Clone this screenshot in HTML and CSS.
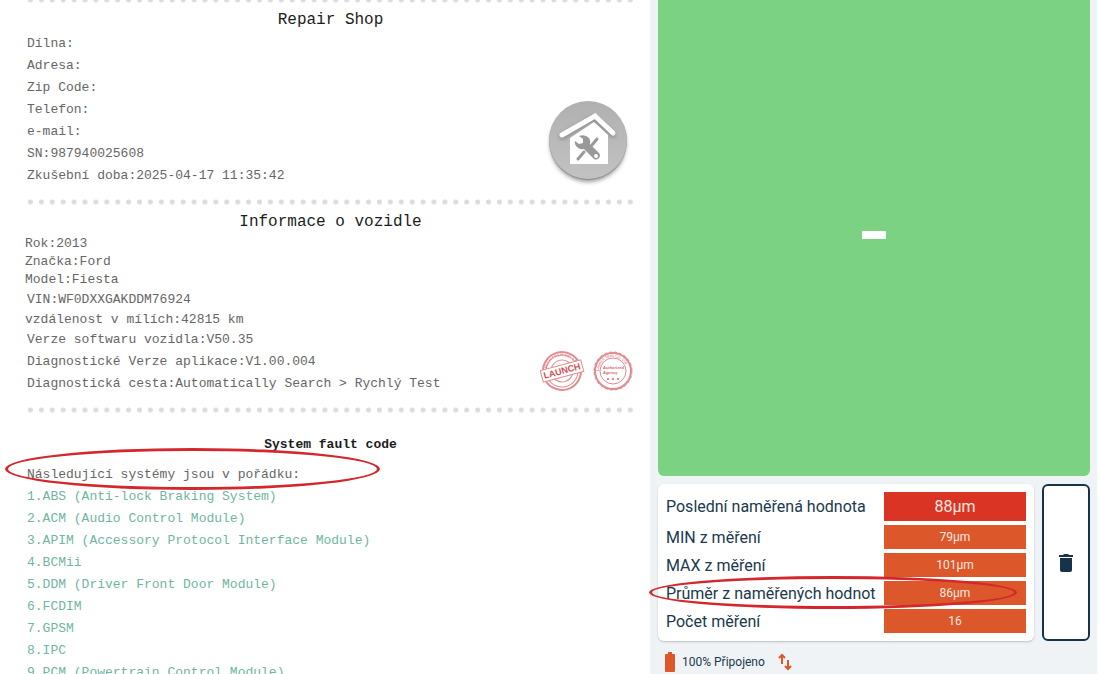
FILE: index.html
```
<!DOCTYPE html>
<html lang="cs">
<head>
  <meta charset="UTF-8">
  <title>Diagnostika a měření laku</title>
  <link rel="stylesheet" href="styles.css">
</head>
<body>
  <main class="page">
    <div class="report">
      <div class="dots first"></div>
      <section>
        <h2>Repair Shop</h2>
        <div class="row">
          <div class="lines">
            <p>Dílna:</p>
            <p>Adresa:</p>
            <p>Zip Code:</p>
            <p>Telefon:</p>
            <p>e-mail:</p>
            <p>SN:987940025608</p>
            <p>Zkušební doba:2025-04-17 11:35:42</p>
          </div>
          <svg class="shop-icon" viewBox="0 0 84 88" width="84" height="88">
            <defs>
              <linearGradient id="disc" x1="0" y1="0" x2="0" y2="1">
                <stop offset="0" stop-color="#b0b0b0"/>
                <stop offset="1" stop-color="#c2c2c2"/>
              </linearGradient>
              <filter id="soft" x="-20%" y="-20%" width="140%" height="140%">
                <feGaussianBlur stdDeviation="2"/>
              </filter>
            </defs>
            <circle cx="42" cy="45" r="38" fill="#999" filter="url(#soft)"/>
            <circle cx="42" cy="42" r="39" fill="#8f8f8f"/>
            <circle cx="42" cy="41" r="39" fill="url(#disc)"/>
            <path d="M16 38 L48 19 L67 36" fill="none" stroke="#888" stroke-width="5" stroke-linecap="round" filter="url(#soft)"/>
            <path d="M24 39 L48 23 L62 36 V65 H24 Z" fill="#fff"/>
            <path d="M16 36 L49 17 L67 34" fill="none" stroke="#fff" stroke-width="5" stroke-linecap="round" stroke-linejoin="miter"/>
            <path d="M51 40 L46 46 M38 53 L32 60" stroke="#999" stroke-width="3" stroke-linecap="round"/>
            <path d="M33 37 q6 -2 10 2 q2 3 1 6 L53 54 a4 4 0 0 1 -5 6 L38 50 q-4 1 -7 -2 q-3 -3 -2 -6 l4 3 4 -1 0 -4 Z" fill="#999"/>
            <circle cx="50" cy="57" r="2" fill="#fff"/>
          </svg>
        </div>
      </section>

      <div class="dots"></div>
      <section>
        <h2>Informace o vozidle</h2>
        <div class="row">
          <div class="groups">
            <div class="lines tight flush">
              <p>Rok:2013</p>
              <p>Značka:Ford</p>
              <p>Model:Fiesta</p>
            </div>
            <div class="lines medium">
              <p>VIN:WF0DXXGAKDDM76924</p>
              <p class="outdent">vzdálenost v mílích:42815 km</p>
              <p>Verze softwaru vozidla:V50.35</p>
            </div>
            <div class="lines">
              <p>Diagnostické Verze aplikace:V1.00.004</p>
              <p>Diagnostická cesta:Automatically Search &gt; Rychlý Test</p>
            </div>
          </div>
          <svg class="stamps" viewBox="0 0 94 46" width="94" height="46">
            <defs>
              <path id="arcA" d="M7 22 a15 15 0 0 1 30 0"/>
              <path id="arcB" d="M59 22 a14 14 0 0 1 28 0"/>
            </defs>
            <g fill="none" stroke="#e08c90">
              <g transform="rotate(-15 22 22)">
                <circle cx="22" cy="22" r="19" stroke-width="2"/>
                <circle cx="22" cy="22" r="16" stroke-width="1"/>
                <circle cx="22" cy="22" r="11" stroke-width="1"/>
                <text class="tiny"><textPath href="#arcA">LAUNCH TECH CO. LTD</textPath></text>
                <rect x="1" y="16" width="42" height="12" fill="#fff" stroke-width="1"/>
                <text class="launch" x="22" y="25" text-anchor="middle">LAUNCH</text>
              </g>
              <circle cx="73" cy="22" r="18" stroke-width="2"/>
              <circle cx="73" cy="22" r="19" stroke-width="1" stroke-dasharray="3 2"/>
              <circle cx="73" cy="22" r="13" stroke-width="1"/>
            </g>
            <text class="tiny"><textPath href="#arcB">Launch Tech Co. Ltd</textPath></text>
            <text class="agency" x="63" y="20">Authorized</text>
            <text class="agency" x="63" y="25">Agency</text>
            <g fill="#d9656b">
              <circle cx="68" cy="30" r="1"/>
              <circle cx="73" cy="30" r="1"/>
              <circle cx="78" cy="30" r="1"/>
            </g>
          </svg>
        </div>
      </section>

      <div class="dots"></div>
      <section>
        <h2 class="fault-title">System fault code</h2>
        <div class="lines">
          <p class="marked">Následující systémy jsou v pořádku:<span class="ring ring-report"></span></p>
          <ul class="systems">
            <li>1.ABS (Anti-lock Braking System)</li>
            <li>2.ACM (Audio Control Module)</li>
            <li>3.APIM (Accessory Protocol Interface Module)</li>
            <li>4.BCMii</li>
            <li>5.DDM (Driver Front Door Module)</li>
            <li>6.FCDIM</li>
            <li>7.GPSM</li>
            <li>8.IPC</li>
            <li>9.PCM (Powertrain Control Module)</li>
          </ul>
        </div>
      </section>
    </div>

    <div class="gauge">
      <div class="display"><span class="dash"></span></div>
      <div class="results">
        <div class="card">
          <table>
            <tr class="last"><th scope="row">Poslední naměřená hodnota</th><td>88µm</td></tr>
            <tr><th scope="row">MIN z měření</th><td>79µm</td></tr>
            <tr><th scope="row">MAX z měření</th><td>101µm</td></tr>
            <tr class="marked"><th scope="row">Průměr z naměřených hodnot<span class="ring ring-gauge"></span></th><td>86µm</td></tr>
            <tr><th scope="row">Počet měření</th><td>16</td></tr>
          </table>
        </div>
        <button class="delete" type="button" aria-label="Smazat">
          <svg viewBox="0 0 14 18" width="14" height="18" fill="#17334a">
            <path d="M0 1 H4 L5 0 H9 L10 1 H14 V3 H0 Z M1 4 H13 V16 a2 2 0 0 1 -2 2 H3 a2 2 0 0 1 -2 -2 Z"/>
          </svg>
        </button>
      </div>
      <div class="status">
        <svg viewBox="0 0 10 20" width="10" height="20" fill="#dc5729">
          <path d="M3 0 H7 V2 H9 a1 1 0 0 1 1 1 V19 a1 1 0 0 1 -1 1 H1 a1 1 0 0 1 -1 -1 V3 a1 1 0 0 1 1 -1 H3 Z"/>
        </svg>
        <span>100% Připojeno</span>
        <svg class="arrows" viewBox="0 0 14 18" width="14" height="18" fill="none" stroke="#dc5729" stroke-width="2">
          <path d="M4 11 V2 M1 5 L4 2 L7 5 M10 7 V16 M7 13 L10 16 L13 13"/>
        </svg>
      </div>
    </div>
  </main>
</body>
</html>
```
FILE: styles.css
```
* { box-sizing: border-box; }
body { margin: 0; background: #fff; }
h2, p, ul { margin: 0; padding: 0; }
.page { display: grid; grid-template-columns: 13fr 9fr; height: 100vh; overflow: hidden; }

/* diagnostic report */
.report { padding: 0 14px 0 25px; color: #666; font: 13px/22px "Liberation Mono", "Courier New", monospace; min-width: 0; overflow: hidden; }
.dots { height: 6px; margin: 12px 0 5px; background: radial-gradient(circle, #dcdcdc 2px, transparent 3px) 0 0 / 11px 6px round; }
.dots.first { margin-top: -3px; }
h2 { color: #1c1c1c; font-size: 16px; line-height: 25px; font-weight: normal; text-align: center; }
.row { display: flex; justify-content: space-between; align-items: flex-end; }
.lines { padding-left: 2px; }
.tight { line-height: 18px; }
.medium { line-height: 20px; }
.flush { padding-left: 0; }
.outdent { margin-left: -2px; }
.groups { display: grid; gap: 1px; }
.shop-icon { margin-right: 6px; flex: none; }
.stamps { margin-right: 2px; flex: none; }
.stamps text { fill: #d9656b; stroke: none; font-family: "Liberation Sans", sans-serif; }
.stamps .tiny { font-size: 4px; }
.stamps .launch { font-size: 9px; font-weight: bold; fill: #d24a52; }
.stamps .agency { font-size: 4px; font-weight: bold; }
.fault-title { margin: 21px 0 8px; font-size: 13px; line-height: 22px; font-weight: bold; }
.systems { list-style: none; color: #6fb5a2; }

/* hand drawn highlight */
.marked { position: relative; }
.ring { position: absolute; border: 3px solid #d3262d; border-radius: 50%; pointer-events: none; }
.ring-report { left: -22px; top: -16px; width: 375px; height: 42px; }
.ring-gauge { left: -17px; right: 9px; top: -5px; height: 33px; }

/* paint thickness gauge */
.gauge { display: flex; flex-direction: column; padding: 0 7px 0 8px; border-right: 3px solid #fcfdfd; background: #eff3f6; color: #20384c; font-family: Roboto, sans-serif; min-width: 0; }
.display { flex: 1; margin-top: -6px; display: flex; align-items: center; justify-content: center; border-radius: 6px; background: #7bd283; }
.dash { width: 24px; height: 8px; background: #fff; }
.results { display: flex; gap: 8px; margin-top: 8px; }
.card { flex: 1; padding: 4px 8px; border-radius: 6px; background: #fff; box-shadow: 0 1px 2px #b9c0c5; }
table { width: 100%; border-spacing: 0 4px; }
th { padding: 0; font-size: 16px; font-weight: normal; text-align: left; white-space: nowrap; }
td { width: 142px; height: 24px; padding: 0; background: #dc5729; color: #fbe9e2; font-size: 12px; text-align: center; }
.last td { height: 29px; background: #da3424; font-size: 16px; }
.delete { width: 48px; display: flex; align-items: center; justify-content: center; padding: 0; border: 2px solid #17334a; border-radius: 6px; background: #fff; }
.status { display: flex; align-items: center; height: 33px; padding: 8px 7px 0; font-size: 12px; gap: 7px; }
.arrows { margin-left: 6px; }
```
